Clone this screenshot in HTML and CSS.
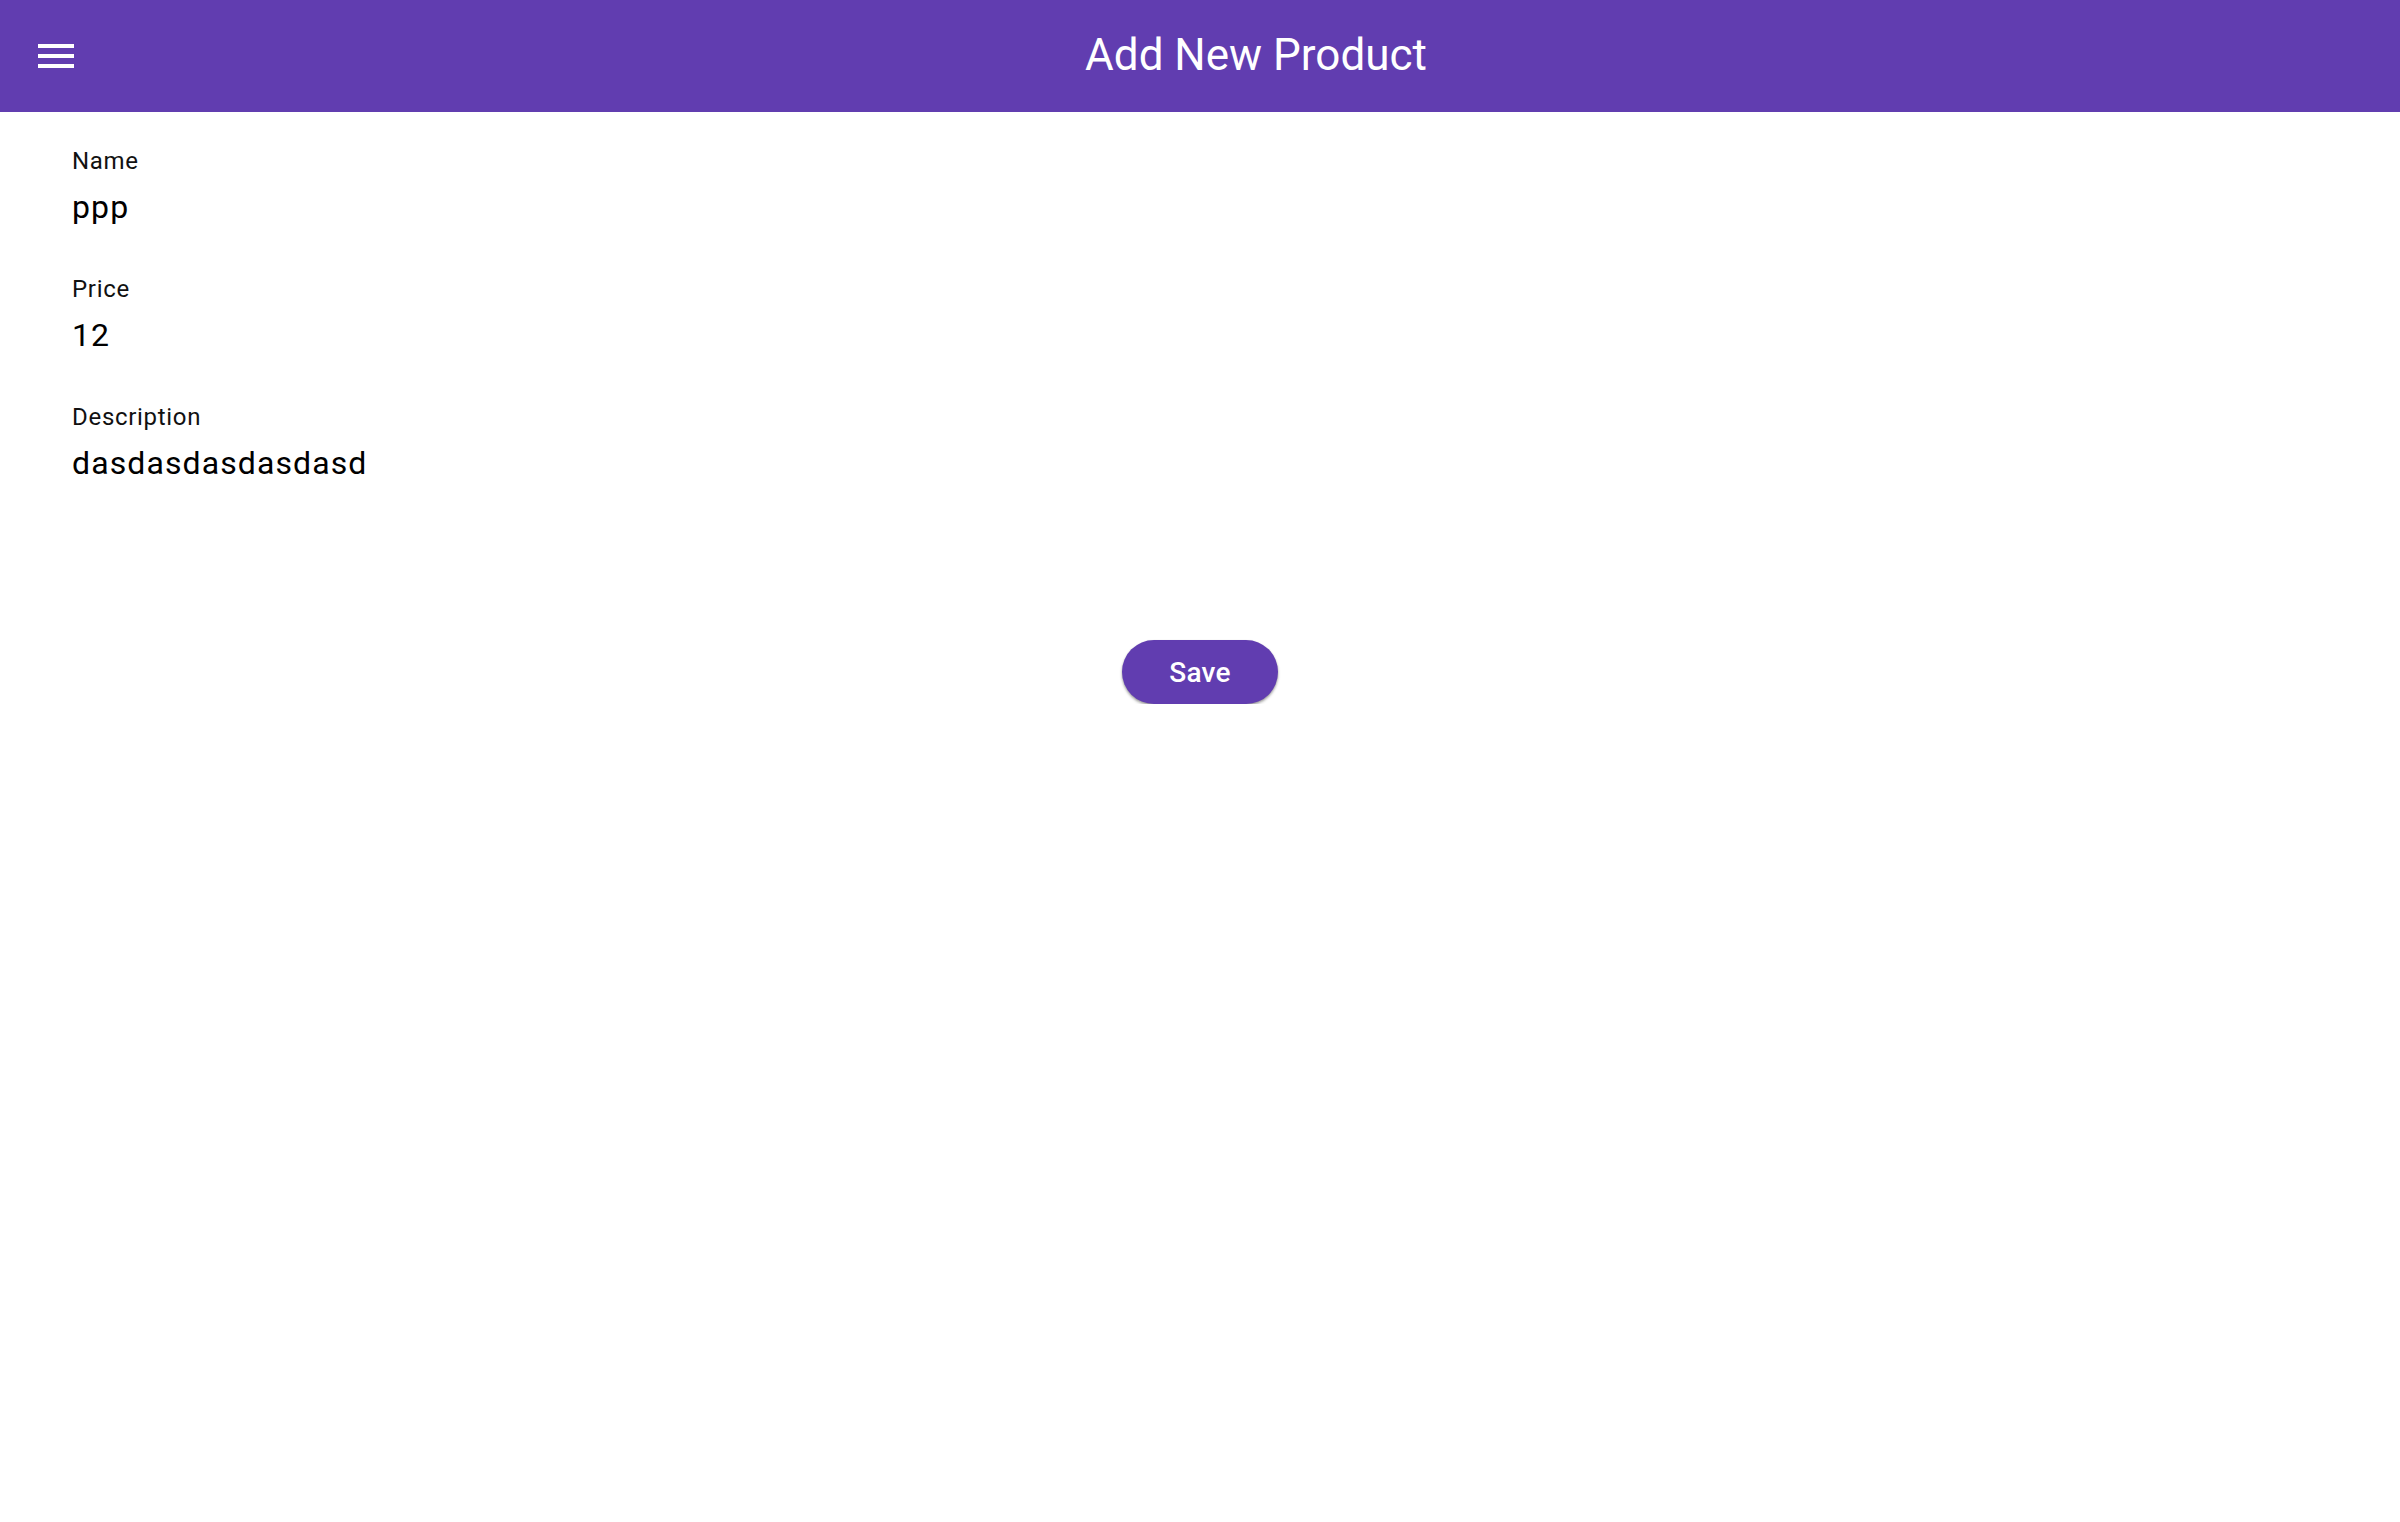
FILE: index.html
```html
<!DOCTYPE html>
<html lang="en">
<head>
<meta charset="utf-8">
<title>Add New Product</title>
<link rel="stylesheet" href="styles.css">
</head>
<body>
<header class="appbar">
  <button class="menu-btn" aria-label="Menu">
    <svg class="menu-icon" viewBox="0 0 24 24" width="48" height="48"><path fill="#fff" d="M3 18h18v-2H3v2zm0-5h18v-2H3v2zm0-7v2h18V6H3z"/></svg>
  </button>
  <h1 class="title">Add New Product</h1>
</header>
<main class="content">
  <div class="field">
    <div class="label">Name</div>
    <div class="value">ppp</div>
  </div>
  <div class="field">
    <div class="label">Price</div>
    <div class="value">12</div>
  </div>
  <div class="field">
    <div class="label">Description</div>
    <div class="value">dasdasdasdasdasd</div>
  </div>
  <div class="actions">
    <button class="save-btn">Save</button>
  </div>
</main>
</body>
</html>
```

FILE: styles.css
```css
html, body {
  margin: 0;
  padding: 0;
  background: #ffffff;
  font-family: Roboto, "Noto Sans", sans-serif;
}

.appbar {
  height: 112px;
  background: #613db0;
  display: flex;
  align-items: center;
}

.menu-btn {
  width: 112px;
  height: 112px;
  border: none;
  background: transparent;
  padding: 0;
  display: flex;
  align-items: center;
  justify-content: center;
  flex: 0 0 112px;
}

.menu-icon {
  display: block;
}

.title {
  flex: 1;
  margin: 0 0 3px 0;
  text-align: center;
  color: #ffffff;
  font-size: 44px;
  font-weight: 400;
  line-height: 1;
}

.content {
  padding: 35px 72px 0 72px;
}

.field {
  margin-bottom: 48px;
}

.label {
  font-size: 24px;
  line-height: 28px;
  letter-spacing: 0.7px;
  color: #111111;
}

.value {
  margin-top: 12px;
  font-size: 32px;
  line-height: 40px;
  letter-spacing: 1.1px;
  color: #000000;
}

.actions {
  display: flex;
  justify-content: center;
  padding-top: 109px;
}

.save-btn {
  width: 156px;
  height: 64px;
  border: none;
  border-radius: 32px;
  background: #613db0;
  color: #ffffff;
  font-family: Roboto, "Noto Sans", sans-serif;
  font-size: 28px;
  font-weight: 500;
  letter-spacing: 0.2px;
  box-shadow: 0 2px 3px rgba(0, 0, 0, 0.3), 0 1px 2px rgba(0, 0, 0, 0.15);
  padding: 0;
}
```
